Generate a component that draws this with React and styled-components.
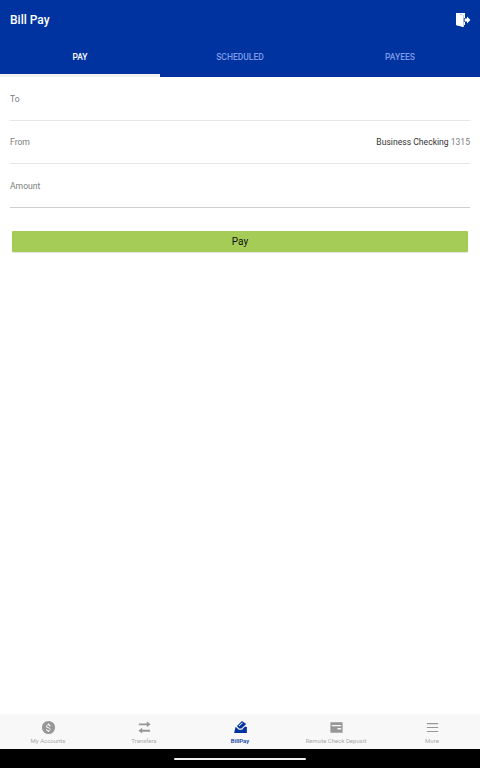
import React from "react";
import styled, { createGlobalStyle } from "styled-components";

const GlobalStyle = createGlobalStyle`
    html, body {
        margin: 0;
        padding: 0;
        background-color: white;
    }
    body {
        font-family: Roboto, "Liberation Sans", sans-serif;
    }
`

const Page = styled.div`
    width: 480px;
    height: 768px;
    display: flex;
    flex-direction: column;
    overflow: hidden;
`

const Header = styled.header`
    height: 77px;
    flex-shrink: 0;
    background-color: #0033a0;
    display: flex;
    flex-direction: column;
`

const TitleBar = styled.div`
    height: 40px;
    padding: 0 9px 1px 10px;
    box-sizing: border-box;
    display: flex;
    align-items: center;
    justify-content: space-between;
`

const Title = styled.h1`
    margin: 0;
    color: white;
    font-size: 12px;
    font-weight: 500;
`

const Tabs = styled.nav`
    height: 37px;
    display: grid;
    grid-template-columns: repeat(3, 1fr);
`

const Tab = styled.div`
    display: flex;
    align-items: center;
    justify-content: center;
    font-size: 8.5px;
    font-weight: 500;
    color: ${props => (props.$active ? "white" : "#7f9be6")};
    border-bottom: 3px solid ${props => (props.$active ? "#f2f2f2" : "#0033a0")};
    box-sizing: border-box;
`

const Form = styled.div`
    padding: 0 10px;
    display: flex;
    flex-direction: column;
`

const Row = styled.div`
    height: ${props => props.$height}px;
    box-sizing: border-box;
    padding-top: ${props => props.$top}px;
    display: flex;
    justify-content: space-between;
    align-items: flex-start;
    font-size: 8.6px;
    line-height: 12px;
    border-bottom: 1px solid ${props => (props.$strong ? "#cfcfcf" : "#e6e6e6")};
`

const Label = styled.span`
    color: #7d7d7d;
`

const AccountName = styled.span`
    color: #333333;
`

const AccountNumber = styled.span`
    color: #7d7d7d;
    margin-left: 2px;
`

const PayButton = styled.button`
    margin: 23px 12px 0;
    height: 21px;
    padding: 0;
    border: none;
    border-radius: 1px;
    background-color: #a6cc58;
    box-shadow: 0 1px 1px rgba(0, 0, 0, 0.12);
    color: #111111;
    font-family: Roboto, "Liberation Sans", sans-serif;
    font-size: 10px;
`

const Spacer = styled.div`
    flex: 1;
`

const BottomNav = styled.nav`
    height: 35px;
    flex-shrink: 0;
    background-color: #f8f8f8;
    display: grid;
    grid-template-columns: repeat(5, 96px);
`

const NavItem = styled.div`
    display: flex;
    flex-direction: column;
    align-items: center;
    padding-top: 6px;
    box-sizing: border-box;
    font-size: 6px;
    line-height: 7px;
    white-space: nowrap;
    color: ${props => (props.$active ? "#0033a0" : "#a8a8a8")};
    font-weight: ${props => (props.$active ? 500 : 400)};
`

const NavIcon = styled.svg`
    width: 15px;
    height: 15px;
    margin-bottom: 2px;
    fill: ${props => (props.$active ? "#0033a0" : "#979797")};
`

const SystemBar = styled.div`
    height: 19px;
    flex-shrink: 0;
    background-color: black;
    display: flex;
    justify-content: center;
    align-items: center;
`

const HomeIndicator = styled.div`
    width: 132px;
    height: 2px;
    border-radius: 1px;
    background-color: #f0f0f0;
`

function ExitIcon() {
    return (
        <svg width="16" height="16" viewBox="0 0 16 16" fill="white">
            <path d="M1 1h9v5H8.6V3.2L4.6 1.9v10.4l4 1.3V10H10v3H8.6v2L1 13z" />
            <path d="M1 1l7.6 2.2V15L1 13z" />
            <path d="M9.6 6.6h2.4V4.6L15.4 8 12 11.4V9.4H9.6z" />
        </svg>
    );
}

const navItems = [
    {
        label: "My Accounts",
        icon: (
            <path fillRule="evenodd" d="M8 1a7 7 0 1 0 0 14A7 7 0 0 0 8 1zm.7 10.9v1H7.3v-1c-1.1-.2-2-.9-2.1-2.1h1.2c.1.7.6 1.1 1.6 1.1 1.1 0 1.4-.5 1.4-.9 0-.5-.3-1-1.6-1.3-1.5-.4-2.4-.9-2.4-2.1 0-1 .8-1.7 1.9-1.9v-1h1.4v1c1.1.3 1.7 1.1 1.7 2H8.6c0-.6-.4-1.1-1.2-1.1-.8 0-1.3.4-1.3.9 0 .5.4.8 1.6 1.1 1.3.3 2.4.9 2.4 2.2 0 1.1-.8 1.8-2.4 2.1z" />
        ),
    },
    {
        label: "Transfers",
        icon: <path d="M10.5 1.5L14.5 4.6 10.5 7.7V5.6H2V3.6h8.5zM5.5 8.3v2.1H14v2H5.5v2.1L1.5 11.4z" />,
    },
    {
        label: "BillPay",
        active: true,
        icon: (
            <>
                <path d="M2.8 7.2L1.2 13.9H14.8V7.5L12.8 7 9.6 10.3H6.2z" />
                <path fillRule="evenodd" d="M4.2 6.5L9.6 1 14 4.2 9 9H6.5zM5.9 6L9.7 2.7l.8.6L6.7 6.7z" />
            </>
        ),
    },
    {
        label: "Remote Check Deposit",
        icon: <path fillRule="evenodd" d="M1.5 2.5h13v11h-13zM3 5.2v1.4h10V5.2zM9 8.6v1.4h4V8.6z" />,
    },
    {
        label: "More",
        icon: <path d="M2 3.2h12v1.2H2zM2 7.4h12v1.2H2zM2 11.6h12v1.2H2z" />,
    },
];

function App() {
    return (
        <Page>
            <GlobalStyle />
            <Header>
                <TitleBar>
                    <Title>Bill Pay</Title>
                    <ExitIcon />
                </TitleBar>
                <Tabs>
                    <Tab $active>PAY</Tab>
                    <Tab>SCHEDULED</Tab>
                    <Tab>PAYEES</Tab>
                </Tabs>
            </Header>

            <Form>
                <Row $height={44} $top={16}>
                    <Label>To</Label>
                </Row>
                <Row $height={43} $top={15}>
                    <Label>From</Label>
                    <span>
                        <AccountName>Business Checking</AccountName>
                        <AccountNumber>1315</AccountNumber>
                    </span>
                </Row>
                <Row $height={44} $top={16} $strong>
                    <Label>Amount</Label>
                </Row>
            </Form>
            <PayButton>Pay</PayButton>

            <Spacer />

            <BottomNav>
                {navItems.map(item => (
                    <NavItem key={item.label} $active={item.active}>
                        <NavIcon viewBox="0 0 16 16" $active={item.active}>
                            {item.icon}
                        </NavIcon>
                        {item.label}
                    </NavItem>
                ))}
            </BottomNav>
            <SystemBar>
                <HomeIndicator />
            </SystemBar>
        </Page>
    );
}

export default App;
